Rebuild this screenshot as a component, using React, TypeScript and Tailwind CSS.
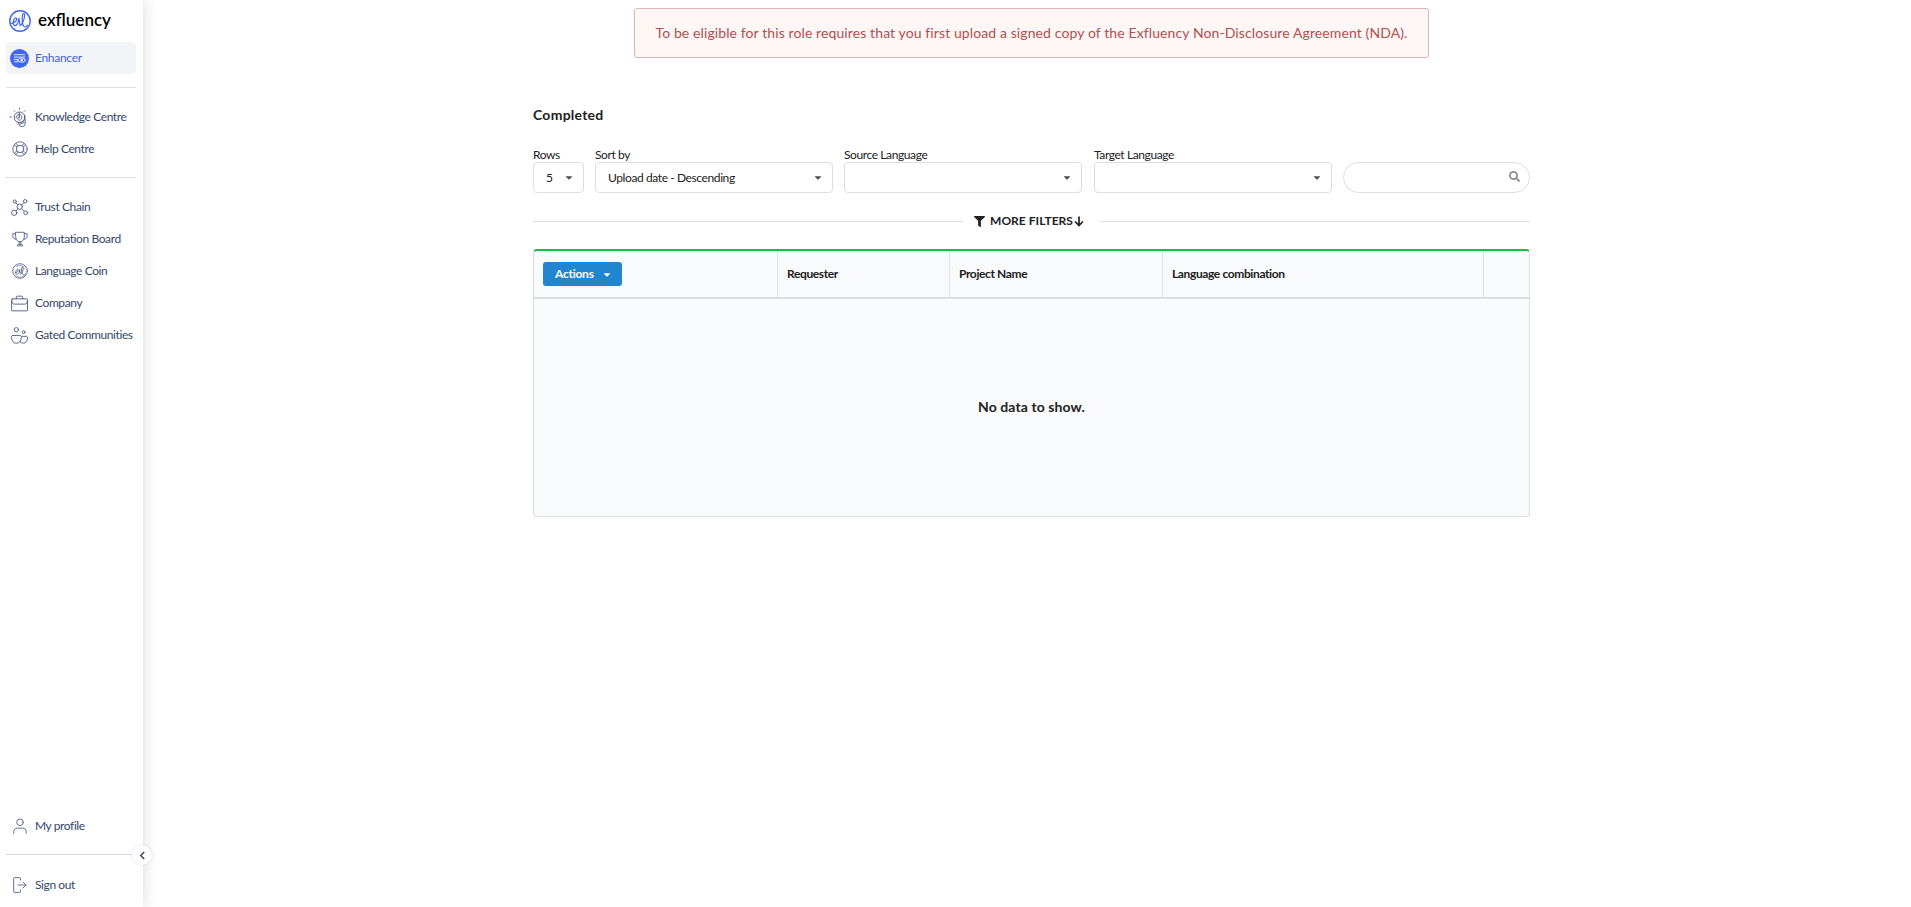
import type { ReactNode } from 'react';
import { FaFilter, FaSearch, FaCaretDown } from 'react-icons/fa';

function Icon({ children, className = 'h-4 w-4' }: { children: ReactNode; className?: string }) {
  return (
    <svg
      viewBox="0 0 16 16"
      className={className}
      fill="none"
      stroke="currentColor"
      strokeWidth="0.9"
      strokeLinecap="round"
      strokeLinejoin="round"
    >
      {children}
    </svg>
  );
}

function Logo() {
  return (
    <svg viewBox="0 0 22 22" className="h-[22px] w-[22px]" fill="none" stroke="#3f66f0" strokeLinecap="round" strokeLinejoin="round">
      <circle cx="11" cy="11" r="10.200" strokeWidth="1.400" />
      <path
        d="M2.500 13.300C5 13 8 11 7.800 9c-.2-1.600-2.300-1.400-3.100 1-1 3-.2 5.800 1.700 5.600C8.700 15.300 9.600 11 10 8.200c.5 2.600.4 6.200 1.300 7.300 1.600-1.500 3.900-6 4.300-9.700.3-2.600-1.600-3-2.100-.6-.7 3.600-.5 9.300 1.300 11.200 1.200 1.200 2.600.2 3.700-1.200"
        strokeWidth="1.200"
      />
    </svg>
  );
}

function EnhancerIcon() {
  return (
    <svg viewBox="0 0 20 20" className="h-[19px] w-[19px]" fill="none" stroke="white" strokeLinecap="round">
      <circle cx="10" cy="10" r="10" fill="#3f66f0" stroke="none" />
      <path d="M4.500 6h11M4.500 8.500h11M4.500 11h3M4.500 13.500h4" strokeWidth="0.900" />
      <path d="M8 11.700c2-2.900 6.500-2.900 8.500 0-2 2.900-6.500 2.900-8.500 0Z" strokeWidth="1" fill="#3f66f0" />
      <circle cx="12.300" cy="11.700" r="1.300" fill="white" stroke="none" />
    </svg>
  );
}

const icons = {
  knowledge: (
    <Icon className="h-[17px] w-[17px] overflow-visible">
      <circle cx="8" cy="7.800" r="5" />
      <path d="M4.800 8.500C4.800 6.500 6 5.200 7.600 5.200s2.600 1.200 2.600 2.600-1 2.700-2.200 2.700-1.900-1-1.600-2 1.400-1.200 2-.4M7.800 3v5.200M6.300 12.300l2.100 3.600c.8 1 3.200.9 4.100 0 .8-.9 1-3.500.8-6M13 5.800v4.400M8 13l4.200-1.800M8.600 14.300l3.700-1.600M8 -.8v.9M2.800 1.500l.7.700M13.200 1.500l-.7.700M-1 7.600H.3" />
    </Icon>
  ),
  help: (
    <Icon>
      <circle cx="8" cy="8" r="7.200" />
      <circle cx="8" cy="8" r="3.700" />
      <path d="M2.400 4 5 6.100M4 2.400 6.100 5M13.600 4 11 6.100M12 2.400 9.900 5M2.400 12 5 9.900M4 13.600 6.100 11M13.600 12 11 9.900M12 13.600 9.900 11" />
    </Icon>
  ),
  chain: (
    <Icon className="h-[17px] w-[17px]">
      <circle cx="8.200" cy="7.300" r="2.500" />
      <circle cx="3.600" cy="2.400" r="1.500" />
      <circle cx="13.300" cy="2.100" r="1.600" />
      <circle cx="3" cy="13" r="2.500" />
      <circle cx="13.800" cy="13" r="1.800" />
      <path d="m4.600 3.700 1.800 1.800M12.200 3.300l-2.100 2.200M4.700 11.200l1.800-2M12.400 11.600l-2.300-2.400" />
    </Icon>
  ),
  trophy: (
    <Icon>
      <path d="M3.700 1.300h8.600v4.900c0 2.700-1.700 4.500-4.300 4.500S3.700 8.900 3.700 6.200ZM3.700 2.700H.8v2c0 2 1.200 3.400 3.300 3.600M12.300 2.700h2.900v2c0 2-1.200 3.400-3.300 3.600M7.200 10.700v3M8.800 10.700v3M5.300 14.500c0-.8.700-1 1.200-1h3c.500 0 1.200.2 1.200 1Z" />
    </Icon>
  ),
  coin: (
    <Icon>
      <circle cx="8" cy="8" r="7.300" />
      <path d="M3.200 9.800C5 9.500 6.500 8.300 6.300 7c-.3-1.200-1.800-.8-2.300.8-.6 2.200.1 3.900 1.400 3.500C6.800 11 7.400 8.500 7.700 6.500c.3 2 .3 3.900 1 4.800 1.200-1.200 2.400-3.800 2.500-6 0-1.700-1.300-1.700-1.500-.2-.3 2.400 0 5.300 1.300 6.500 1 .7 1.900.2 2.600-.6" />
      <path d="M4 3.700C6.500 1.800 10.800 2 12.800 5.200M3.700 12.300c2 2.200 5.800 2.600 8.500.7" strokeWidth="0.600" />
    </Icon>
  ),
  company: (
    <Icon className="h-[17px] w-[17px]">
      <rect x="0.600" y="3.600" width="14.900" height="11.300" rx="0.700" />
      <path d="M5 3.500V2c0-.6.300-.9.900-.9h4.200c.6 0 .9.300.9.900v1.500M.8 5.800c0 2.200 1.200 2.800 2.500 2.800h9.500c1.300 0 2.500-.6 2.500-2.800" />
    </Icon>
  ),
  communities: (
    <Icon className="h-[17px] w-[17px]">
      <circle cx="5" cy="2.500" r="2" />
      <circle cx="11.900" cy="4.900" r="1.300" />
      <path d="M1.500 8h3.200M5.500 8h2.800c1.200 0 1.700.7 1.500 1.900-.3 3.200-1.900 5.400-4.700 5.400S.8 13.100.4 9.900C.3 8.700.7 8 1.500 8M10.500 8.800h3.800c1 0 1.400.5 1.300 1.600-.3 3-1.600 4.800-3.900 4.800-1.500 0-2.700-.6-3.500-1.600" />
    </Icon>
  ),
  profile: (
    <Icon>
      <circle cx="8" cy="4.300" r="3.300" />
      <path d="M1.800 15.300v-1.500c0-2.400 1.400-3.700 3.700-3.700h5c2.300 0 3.700 1.300 3.700 3.700v1.500" />
    </Icon>
  ),
  signout: (
    <Icon>
      <path d="M8.500 3V1.400c0-.5-.3-.8-.8-.8H2.500c-.5 0-.8.300-.8.800v13.200c0 .5.300.8.800.8h5.200c.5 0 .8-.3.800-.8V13M6 8h8M11 5l3 3-3 3" />
    </Icon>
  ),
};

function Item({ icon, label }: { icon: ReactNode; label: string }) {
  return (
    <a className="flex h-8 items-center pl-[5px] text-[12px] tracking-[-0.4px] whitespace-nowrap text-[#33476b]">
      <span className="flex w-[17px] shrink-0 justify-center text-[#52628a]">{icon}</span>
      <span className="ml-[7px]">{label}</span>
    </a>
  );
}

function Rule() {
  return <div className="h-px shrink-0 bg-[#dcdde0]" />;
}

function Select({ label, value, className }: { label: string; value: string; className: string }) {
  return (
    <div className={className}>
      <div className="h-[14px] text-[12px] leading-[14px] tracking-[-0.4px] text-[#212121]">{label}</div>
      <div className="flex h-[31px] items-center justify-between rounded-[4px] border border-[#dededf] bg-white pr-[10px] pl-3 text-[12px] tracking-[-0.4px] text-[#212121]">
        <span>{value}</span>
        <FaCaretDown className="h-[11px] w-[8px] text-[#4d4d4d]" />
      </div>
    </div>
  );
}

export default function App() {
  return (
    <div className="flex h-[907px] bg-white font-[Lato,sans-serif] text-[#212121]">
      <aside className="relative flex w-[143px] shrink-0 flex-col px-[6px] shadow-[2px_0_12px_rgba(34,36,60,0.14)]">
        <div className="flex h-[42px] items-center pl-[3px]">
          <Logo />
          <span className="-mt-[2px] ml-[7px] text-[17px] leading-5 font-semibold text-black">exfluency</span>
        </div>
        <div className="flex h-8 w-[130px] shrink-0 items-center rounded-[4px] bg-[#f3f4f7] pl-1 text-[12px] tracking-[-0.3px] text-[#3f5fe8]">
          <EnhancerIcon />
          <span className="ml-[6px]">Enhancer</span>
        </div>
        <nav className="flex w-[130px] flex-col pt-[13px]">
          <Rule />
          <div className="pt-[13px] pb-[12px]">
            <Item icon={icons.knowledge} label="Knowledge Centre" />
            <Item icon={icons.help} label="Help Centre" />
          </div>
          <Rule />
          <div className="pt-[13px]">
            <Item icon={icons.chain} label="Trust Chain" />
            <Item icon={icons.trophy} label="Reputation Board" />
            <Item icon={icons.coin} label="Language Coin" />
            <Item icon={icons.company} label="Company" />
            <Item icon={icons.communities} label="Gated Communities" />
          </div>
        </nav>
        <div className="mt-auto w-[130px] pb-[6px]">
          <Item icon={icons.profile} label="My profile" />
          <div className="pt-3 pb-[14px]">
            <div className="h-px bg-[#d3d8e2]" />
          </div>
          <Item icon={icons.signout} label="Sign out" />
        </div>
        <button className="absolute right-[-9px] bottom-[42px] flex h-5 w-5 items-center justify-center rounded-full bg-white text-[#33476b] shadow-[0_0_3px_rgba(0,0,0,0.14)]">
          <svg viewBox="0 0 8 10" className="h-[9px] w-[7px]" fill="none" stroke="currentColor" strokeWidth="1.700">
            <path d="M6 1 2 5l4 4" />
          </svg>
        </button>
      </aside>

      <main className="flex flex-1 flex-col items-center pt-2 pl-[9px]">
        <div className="flex h-[50px] w-[795px] items-center justify-center rounded-[3px] border border-[#e0b4b4] bg-[#fff6f6] pb-[2px] text-[14px] tracking-[0.104px] whitespace-nowrap text-[#b0504f]">
          To be eligible for this role requires that you first upload a signed copy of the Exfluency Non-Disclosure Agreement (NDA).
        </div>

        <section className="w-[997px] pt-[47px]">
          <h1 className="text-[14px] leading-5 font-bold tracking-[0.25px]">Completed</h1>

          <div className="mt-[23px] flex items-end">
            <Select label="Rows" value="5" className="w-[51px]" />
            <Select label="Sort by" value="Upload date - Descending" className="ml-[11px] w-[238px]" />
            <Select label="Source Language" value="" className="ml-[11px] w-[238px]" />
            <Select label="Target Language" value="" className="ml-[12px] w-[238px]" />
            <div className="ml-[11px] flex h-[31px] w-[187px] items-center justify-end rounded-full border border-[#dededf] pr-[9px]">
              <FaSearch className="mb-[2px] h-[11px] w-[11px] text-[#8c8c8c]" />
            </div>
          </div>

          <div className="mt-[18px] flex h-5 items-center">
            <div className="h-px w-[430px] bg-[#dededf]" />
            <div className="flex flex-1 items-center pl-[11px] text-[12px] font-bold tracking-[0.04px] whitespace-nowrap">
              <FaFilter className="mr-[5px] h-[11px] w-[11px]" />
              MORE FILTERS
              <svg viewBox="0 0 10 11" className="ml-px h-[11px] w-[10px]" fill="none" stroke="currentColor" strokeWidth="1.700">
                <path d="M5 .5v9M1 5.500l4 4 4-4" />
              </svg>
            </div>
            <div className="h-px w-[430px] bg-[#dededf]" />
          </div>

          <div className="mt-[18px] overflow-hidden rounded-[4px] border border-t-2 border-[#dededf] border-t-[#21ba45] bg-[#f9fafb]">
            <div className="flex h-[48px] items-stretch border-b-2 border-[#dcdddf] text-[12px] font-bold tracking-[-0.38px]">
              <div className="flex w-[244px] items-center border-r border-[#e1e2e3] pl-[9px]">
                <button className="flex h-6 w-[79px] items-center rounded-[3px] bg-[#2185d0] pl-[12px] tracking-[-0.25px] text-white">
                  Actions
                  <FaCaretDown className="ml-[9px] h-[11px] w-[8px]" />
                </button>
              </div>
              <div className="flex w-[172px] items-center border-r border-[#e1e2e3] pl-[9px]">Requester</div>
              <div className="flex w-[213px] items-center border-r border-[#e1e2e3] pl-[9px]">Project Name</div>
              <div className="flex w-[321px] items-center border-r border-[#e1e2e3] pl-[9px]">Language combination</div>
            </div>
            <div className="flex h-[217px] items-center justify-center pb-[2px] text-[14px] font-bold tracking-[0.08px]">No data to show.</div>
          </div>
        </section>
      </main>
    </div>
  );
}
